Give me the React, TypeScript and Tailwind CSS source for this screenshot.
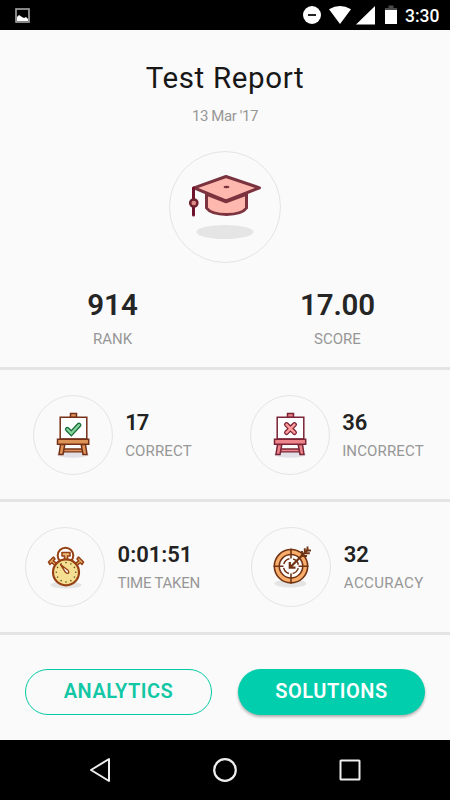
import type { ReactNode } from 'react'

function StatusBar() {
  return (
    <header className="flex h-[30px] items-center justify-between bg-black pr-[10px] pl-[15px] text-white">
      <svg width="15" height="15" viewBox="0 0 15 15">
        <rect x="1" y="1" width="13" height="13" fill="#000" stroke="#a8a8a8" strokeWidth="1.600" />
        <path d="M2 13V9l2-2 3 2 2 1 2-1 2 2v2z" fill="#fff" />
      </svg>
      <div className="flex items-center">
        <svg width="106" height="30" viewBox="299 0 106 30">
          <circle cx="312" cy="15" r="9" fill="#fff" />
          <path d="M308 15h8" stroke="#222" strokeWidth="2" />
          <path d="M329 9.3Q340 2.500 351 9.3L340 24z" fill="#fff" />
          <path d="M375 6v18.500h-19z" fill="#fff" />
          <path d="M388.500 5.500h5V8h3.500v2h-12V8h3.500z" fill="#4a4a4a" />
          <path d="M385 10h12v14h-12z" fill="#fff" />
        </svg>
        <span className="w-[35px] pt-[1px] text-[17.5px] leading-[30px] font-medium whitespace-nowrap">3:30</span>
      </div>
    </header>
  )
}

function GraduationCap() {
  return (
    <svg width="110" height="110" viewBox="170 152 110 110" strokeLinejoin="round" strokeLinecap="round">
      <ellipse cx="225" cy="232" rx="28.500" ry="7" fill="#e5e5e5" />
      <path d="M206.500 193v15c6 8.500 34 8.500 40 0v-15" fill="#ffb8ad" stroke="#7b333f" strokeWidth="3" />
      <path d="M194 187.800l32-11.300 33.500 11.300L226 201z" fill="#ffb8ad" stroke="#7b333f" strokeWidth="3" />
      <path d="M208 195.300l18 7 19-7" fill="none" stroke="#7b333f" strokeWidth="2" />
      <ellipse cx="226.500" cy="187" rx="3" ry="1.300" fill="#7b333f" />
      <path d="M193.500 188v27" stroke="#70122c" strokeWidth="3" />
      <circle cx="193.800" cy="203" r="3.600" fill="#dc8c86" stroke="#70212f" strokeWidth="2.500" />
    </svg>
  )
}

type EaselProps = { line: string; wood: string; children: ReactNode }

function Easel({ line, wood, children }: EaselProps) {
  return (
    <svg width="78" height="78" viewBox="0 0 78 78" strokeWidth="1.500">
      <ellipse cx="39" cy="58.500" rx="16" ry="3.200" fill="#e1e0e6" />
      <path d="M28 53h22v2.800H28z" fill={wood} stroke={line} strokeWidth="1.300" />
      <path d="M26.500 48.500h4.300l-1.800 10h-4zM47.200 48.500h4.300l1.500 10h-4z" fill={wood} stroke={line} />
      <path d="M36.500 17.400h6v4h-6z" fill={wood} stroke={line} />
      <path d="M26.200 21.200h26.600V43H26.200z" fill="#fff" stroke={line} />
      <path d="M23.500 43.200h31.200v5H23.500z" fill={wood} stroke={line} />
      {children}
    </svg>
  )
}

function CorrectIcon() {
  return (
    <Easel line="#753018" wood="#df9457">
      <path d="M33.300 33.300l4 4L45 29" fill="none" stroke="#176b36" strokeWidth="4.800" strokeLinecap="round" />
      <path d="M33.300 33.300l4 4L45 29" fill="none" stroke="#86d49d" strokeWidth="2.300" strokeLinecap="round" />
    </Easel>
  )
}

function IncorrectIcon() {
  return (
    <Easel line="#7a2436" wood="#ee858b">
      <path d="M35.500 28.600l8 8m0-8l-8 8" fill="none" stroke="#7a2436" strokeWidth="5" strokeLinecap="round" />
      <path d="M35.500 28.600l8 8m0-8l-8 8" fill="none" stroke="#ff9c9c" strokeWidth="2.400" strokeLinecap="round" />
    </Easel>
  )
}

function StopwatchIcon() {
  const marks = Array.from({ length: 12 }, (_, i) => i * 30)

  return (
    <svg width="78" height="78" viewBox="26 528.500 78 78" strokeLinejoin="round">
      <ellipse cx="66" cy="585.500" rx="15.500" ry="3.500" fill="#e4e4e4" />
      <circle cx="65.500" cy="556" r="7.800" fill="#fff" stroke="#974215" strokeWidth="2" />
      <path d="M62 553h8v3.500h-2.500v4h-3v-4H62z" fill="#eabb76" stroke="#974215" strokeWidth="1.600" />
      <path d="M48.500 562.500l5-5 1.500 2-1.700 1.800 4 3-2 2-3.500-3-1.800 1.700zM83.500 562.500l-5-5-1.500 2 1.700 1.800-4 3 2 2 3.500-3 1.800 1.700z" fill="#e2ad69" stroke="#974215" strokeWidth="1.500" />
      <circle cx="66" cy="572.800" r="13" fill="#f5df93" stroke="#974215" strokeWidth="2.200" />
      {marks.map((angle) => (
        <circle key={angle} cx="66" cy="563.100" r=".8" fill="#69511e" transform={`rotate(${angle} 66 572.800)`} />
      ))}
      <path d="M60.500 565l7.500 5.800c2 3-.5 4-2.500 2z" fill="#fff" stroke="#974215" strokeWidth="1.400" />
    </svg>
  )
}

function TargetIcon() {
  return (
    <svg width="78" height="78" viewBox="252.500 528.500 78 78">
      <ellipse cx="291" cy="584" rx="16" ry="4" fill="#e4e4e4" />
      <circle cx="291.500" cy="566.700" r="14.200" fill="#fff" stroke="#713414" strokeWidth="6.500" />
      <circle cx="291.500" cy="566.700" r="14.200" fill="none" stroke="#f8ad6b" strokeWidth="3.400" />
      <circle cx="291.500" cy="566.700" r="7.500" fill="none" stroke="#713414" strokeWidth="1.500" strokeDasharray="8 3.780" strokeDashoffset="-2" />
      <path d="M291.500 549v10m0 15v10M274 566.700h10m15 0h10" stroke="#713414" strokeWidth="1.600" />
      <path d="M291.500 567l17-17M290.300 562.500v5.700h5.700" fill="none" stroke="#713414" strokeWidth="2.300" />
      <path d="M302.500 551.500v5h5M305.300 548.700v5h5M308 547v4h3.500" fill="none" stroke="#713414" strokeWidth="1.900" />
    </svg>
  )
}

type StatProps = { icon: ReactNode; value: ReactNode; children: ReactNode }

function Stat({ icon, value, children }: StatProps) {
  return (
    <div className="flex items-center justify-center gap-[12.5px]">
      <div className="flex size-20 shrink-0 items-center justify-center rounded-full border border-[#e4e4e4]">{icon}</div>
      <div className="whitespace-nowrap">
        <div className="mt-[2px] text-[22px] leading-7 font-semibold text-[#222]">{value}</div>
        <div className="mt-[2px] text-[15px] leading-6 text-[#979797]">{children}</div>
      </div>
    </div>
  )
}

export default function App() {
  return (
    <div className="flex h-[800px] w-[450px] flex-col overflow-hidden bg-[#fafafa] font-[Roboto,sans-serif]">
      <StatusBar />
      <main className="flex flex-1 flex-col">
        <section className="flex h-[340px] flex-col items-center border-b-[3px] border-[#e4e4e4] pt-[28px]">
          <h1 className="text-[29.5px] leading-10 tracking-[0.65px] text-[#171717]">Test Report</h1>
          <p className="mt-[8px] text-[15px] leading-5 tracking-[-0.4px] text-[#979797]">13 Mar '17</p>
          <div className="mt-[25px] flex size-[112px] items-center justify-center rounded-full border border-[#e4e4e4]">
            <GraduationCap />
          </div>
          <div className="mt-[22px] grid w-full grid-cols-2 text-center">
            <div>
              <div className="text-[29.5px] leading-10 font-semibold text-[#252525]">914</div>
              <div className="mt-[2px] text-[15px] leading-6 text-[#979797]">RANK</div>
            </div>
            <div>
              <div className="text-[29.5px] leading-10 font-semibold tracking-[-0.2px] text-[#252525]">17.00</div>
              <div className="mt-[2px] text-[15px] leading-6 text-[#979797]">SCORE</div>
            </div>
          </div>
        </section>
        <section className="grid h-[132px] grid-cols-2 border-b-[3px] border-[#e4e4e4] pr-[1px]">
          <Stat icon={<CorrectIcon />} value={<span className="tracking-[-1px]">17</span>}><span className="tracking-[0.15px]">CORRECT</span></Stat>
          <Stat icon={<IncorrectIcon />} value="36"><span className="tracking-[0.15px]">INCORRECT</span></Stat>
        </section>
        <section className="grid h-[133px] grid-cols-2 border-b-[3px] border-[#e4e4e4]">
          <Stat icon={<StopwatchIcon />} value="0:01:51"><span className="tracking-[-0.25px]">TIME TAKEN</span></Stat>
          <Stat icon={<TargetIcon />} value="32"><span className="tracking-[0.4px]">ACCURACY</span></Stat>
        </section>
        <div className="flex justify-between px-[25px] pt-[34px] text-[20px] leading-none font-semibold tracking-[0.5px]">
          <button className="h-[46px] w-[187px] rounded-full border border-[#04c9a4] pb-[2px] text-[#12c7a5]">ANALYTICS</button>
          <button className="h-[46px] w-[187px] rounded-full bg-[#00ceac] pb-[2px] text-white shadow-[0_2px_3px_rgba(0,0,0,0.3)]">SOLUTIONS</button>
        </div>
      </main>
      <nav className="flex h-[60px] items-center justify-between bg-black px-[88px]">
        <svg width="24" height="26" viewBox="0 0 24 26" fill="none" stroke="#eee" strokeWidth="2" strokeLinejoin="round">
          <path d="M21 2v22L3 13z" />
        </svg>
        <svg width="26" height="26" viewBox="0 0 26 26" fill="none" stroke="#eee" strokeWidth="2.200">
          <circle cx="13" cy="13" r="10.800" />
        </svg>
        <svg width="24" height="24" viewBox="0 0 24 24" fill="none" stroke="#eee" strokeWidth="2">
          <rect x="2.500" y="2.500" width="19" height="19" rx=".5" />
        </svg>
      </nav>
    </div>
  )
}
